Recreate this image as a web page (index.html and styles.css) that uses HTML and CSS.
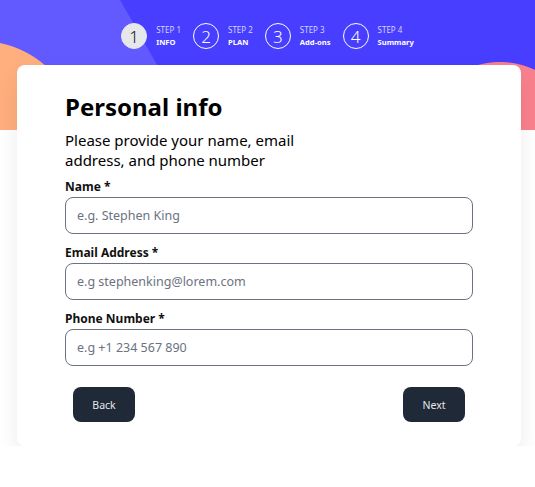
FILE: index.html
```html
<!DOCTYPE html>
<html lang="en">
<head>
<meta charset="utf-8">
<title>Personal info</title>
<link rel="stylesheet" href="styles.css">
</head>
<body>
<header class="hero">
  <ol class="steps">
    <li class="step active">
      <span class="step-num">1</span>
      <span class="step-text"><span class="step-small">STEP 1</span><span class="step-name">INFO</span></span>
    </li>
    <li class="step">
      <span class="step-num">2</span>
      <span class="step-text"><span class="step-small">STEP 2</span><span class="step-name">PLAN</span></span>
    </li>
    <li class="step">
      <span class="step-num">3</span>
      <span class="step-text"><span class="step-small">STEP 3</span><span class="step-name">Add-ons</span></span>
    </li>
    <li class="step">
      <span class="step-num">4</span>
      <span class="step-text"><span class="step-small">STEP 4</span><span class="step-name">Summary</span></span>
    </li>
  </ol>
</header>
<main class="card">
  <h1 class="title">Personal info</h1>
  <p class="lead">Please provide your name, email address, and phone number</p>
  <form class="form">
    <div class="field">
      <label class="label" for="name">Name *</label>
      <input class="input" id="name" type="text" placeholder="e.g. Stephen King">
    </div>
    <div class="field">
      <label class="label" for="email">Email Address *</label>
      <input class="input" id="email" type="email" placeholder="e.g stephenking@lorem.com">
    </div>
    <div class="field">
      <label class="label" for="phone">Phone Number *</label>
      <input class="input" id="phone" type="tel" placeholder="e.g +1 234 567 890">
    </div>
    <div class="actions">
      <button type="button" class="btn">Back</button>
      <button type="button" class="btn">Next</button>
    </div>
  </form>
</main>
</body>
</html>
```
FILE: styles.css
```css
* { box-sizing: border-box; }
html, body { margin: 0; padding: 0; }
body {
  background: #ffffff;
  font-family: "Noto Sans", "Open Sans", sans-serif;
  color: #000;
}
.hero {
  height: 130px;
  padding-top: 23px;
  background:
    radial-gradient(circle at 500px 143px, #F9818E 80.5px, rgba(249,129,142,0) 81.5px),
    radial-gradient(circle at -20px 140px, #FFAF7E 98.5px, rgba(255,175,126,0) 99.5px),
    linear-gradient(60.3deg, #6259FF 168.2px, #483EFF 169.2px);
}
.steps {
  list-style: none;
  margin: 0;
  padding: 0;
  display: flex;
  justify-content: center;
  gap: 12px;
}
.step {
  display: flex;
  align-items: center;
  gap: 9px;
}
.step-num {
  width: 26px;
  height: 26px;
  border-radius: 50%;
  border: 1px solid #ffffff;
  color: #ffffff;
  display: flex;
  align-items: center;
  justify-content: center;
  font-size: 17px;
  font-weight: 300;
}
.active .step-num {
  background: #e5e7eb;
  border-color: #e5e7eb;
  color: #111827;
}
.step-text {
  display: flex;
  flex-direction: column;
  gap: 2px;
  line-height: 10px;
}
.step-small { color: #d6d3ff; font-size: 8px; }
.step-name { color: #ffffff; font-weight: 700; font-size: 7.6px; }

.card {
  width: 504px;
  margin: -65px 0 0 17px;
  background: #ffffff;
  border-radius: 8px;
  box-shadow: 0 10px 22px rgba(0, 0, 0, 0.08);
  padding: 26px 48px 24px 48px;
}
.title {
  margin: 0;
  font-size: 24px;
  line-height: 32px;
  font-weight: 700;
}
.lead {
  margin: 7px 0 0;
  font-size: 15px;
  line-height: 20px;
  width: 245px;
}
.form { margin-top: 9px; }
.field { margin-bottom: 11px; }
.label {
  display: block;
  font-size: 12px;
  line-height: 16px;
  font-weight: 700;
  margin-bottom: 2px;
  color: #111;
}
.input {
  display: block;
  width: 100%;
  height: 37px;
  border: 1px solid #6b7280;
  border-radius: 8px;
  padding: 0 11px;
  font-family: inherit;
  font-size: 12.5px;
  color: #111;
  background: #fff;
  outline: none;
}
.input::placeholder { color: #6b7280; }
.actions {
  display: flex;
  justify-content: space-between;
  padding: 0 8px;
  margin-top: 21px;
}
.btn {
  width: 62px;
  height: 35px;
  border: 0;
  border-radius: 8px;
  background: #1f2937;
  color: #e5e7eb;
  font-family: inherit;
  font-size: 10.5px;
  cursor: pointer;
}
```
